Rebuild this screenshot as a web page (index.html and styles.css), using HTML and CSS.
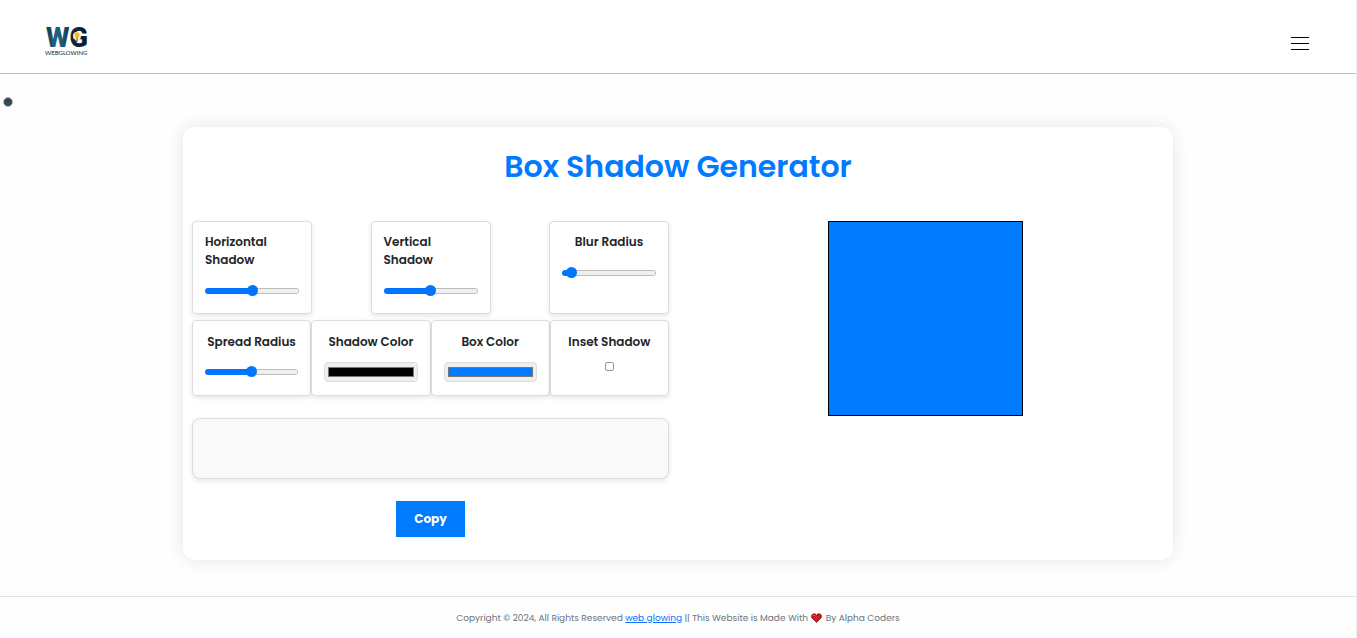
FILE: index.html
```html
<!DOCTYPE html>
<html lang="en">
<head>
<meta charset="utf-8">
<meta name="viewport" content="width=device-width, initial-scale=1">
<title>Box Shadow Generator</title>
<link rel="stylesheet" href="styles.css">
</head>
<body>
<header class="site-header">
  <a class="brand" href="#" aria-label="Web Glowing">
    <svg class="logo" viewBox="0 0 44 32" role="img" aria-label="WG Webglowing">
      <defs>
        <linearGradient id="ink" x1="0" y1="0" x2="1" y2="0">
          <stop offset="0" stop-color="#10324a"/>
          <stop offset=".2" stop-color="#1d6482"/>
          <stop offset=".4" stop-color="#1b5a76"/>
          <stop offset=".6" stop-color="#10273c"/>
          <stop offset="1" stop-color="#0c1b2c"/>
        </linearGradient>
      </defs>
      <text class="logo-letters" x="1" y="23" fill="url(#ink)">WG</text>
      <circle cx="32" cy="12" r="4" fill="#fff3c9"/>
      <circle cx="32" cy="11" r="2.500" fill="#f6b82e"/>
      <path d="M31 13h2v3h-2z" fill="#e79a22"/>
      <path d="M31 17h2" stroke="#1b3345" stroke-width="1"/>
      <text class="logo-caption" x="0" y="31">WEBGLOWING</text>
    </svg>
  </a>
  <button class="menu" type="button" aria-label="Open menu">
    <svg viewBox="0 0 18 13" width="18" height="13" aria-hidden="true" shape-rendering="crispEdges">
      <path d="M0 .5h18M0 6.500h18M0 12.500h18" stroke="#000" fill="none"/>
    </svg>
  </button>
</header>
<span class="cursor-dot"></span>

<main class="page">
  <section class="panel">
    <h1 class="title">Box Shadow Generator</h1>
    <div class="columns">
      <div class="controls">
        <div class="row row-spread">
          <div class="field">
            <label for="h">Horizontal Shadow</label>
            <input class="range" id="h" type="range" min="-50" max="50" value="0" style="--fill:50%">
          </div>
          <div class="field">
            <label for="v">Vertical Shadow</label>
            <input class="range" id="v" type="range" min="-50" max="50" value="0" style="--fill:50%">
          </div>
          <div class="field">
            <label for="blur">Blur Radius</label>
            <input class="range" id="blur" type="range" min="0" max="100" value="5" style="--fill:6%">
          </div>
        </div>
        <div class="row row-even">
          <div class="field">
            <label for="spread">Spread Radius</label>
            <input class="range" id="spread" type="range" min="-50" max="50" value="0" style="--fill:50%">
          </div>
          <div class="field">
            <label for="shadow-color">Shadow Color</label>
            <input class="color" id="shadow-color" type="color" value="#000000">
          </div>
          <div class="field">
            <label for="box-color">Box Color</label>
            <input class="color" id="box-color" type="color" value="#007bff">
          </div>
          <div class="field">
            <label for="inset">Inset Shadow</label>
            <input class="check" id="inset" type="checkbox">
          </div>
        </div>
        <output class="code" aria-label="Generated CSS"></output>
        <button class="copy" type="button">Copy</button>
      </div>
      <div class="preview-area"><div class="preview"></div></div>
    </div>
  </section>
</main>

<footer class="site-footer">
  <p>Copyright © 2024, All Rights Reserved <a href="#">web glowing</a> || This Website is Made With
    <svg class="heart" viewBox="0 0 11 10" role="img" aria-label="love"><path d="M5.500 9.300 1 4.900C0 3.500.6 1.300 2.500.9c1.200-.2 2.300.3 3 1.400C6.200 1.200 7.300.7 8.500.9c1.900.4 2.500 2.600 1.500 4z" fill="#e8101c" stroke="#3b1114" stroke-width=".8"/><path d="M2.500 3c.2-.6.600-.8 1.100-.8" stroke="#ff9a9a" fill="none"/></svg>
    By Alpha Coders</p>
</footer>
</body>
</html>
```
FILE: styles.css
```css
* {
  box-sizing: border-box;
}

body {
  margin: 0;
  min-height: 100vh;
  display: flex;
  flex-direction: column;
  border-right: 1px solid #eee;
  background: #fefefe;
  color: #212529;
  font-family: Poppins, Inter, "Open Sans", sans-serif;
  font-size: 12px;
  line-height: 18px;
}

.site-header {
  display: flex;
  align-items: flex-end;
  justify-content: space-between;
  padding: 24px 47px 17px 45px;
  border-bottom: 1px solid #bdbdbd;
  background: #fff;
}

.brand,
.logo {
  display: block;
}

.logo {
  width: 44px;
  height: 32px;
  overflow: visible;
}

.logo-letters {
  font: 900 27px Roboto, sans-serif;
}

.logo-caption {
  font: 400 6px Lato, sans-serif;
  fill: #222;
}

.menu {
  display: flex;
  padding: 6px 0;
  border: 0;
  background: none;
}

.cursor-dot {
  position: absolute;
  top: 97px;
  left: 3px;
  width: 10px;
  height: 10px;
  border: 1px solid #a9b6bd;
  border-radius: 50%;
  background: #37474f;
}

.page {
  padding: 53px 16px 36px;
}

.panel {
  max-width: 990px;
  margin: 0 auto;
  padding: 18px 9px 23px;
  border-radius: 12px;
  background: #fff;
  box-shadow: 0 0 18px rgba(0, 0, 0, 0.1);
}

.title {
  margin: 0 0 33px;
  color: #007bff;
  font-size: 30px;
  font-weight: 600;
  line-height: 43px;
  text-align: center;
}

.columns {
  display: grid;
  grid-template-columns: 1fr 1fr;
  gap: 18px;
}

.controls {
  display: flex;
  flex-direction: column;
}

.row {
  display: grid;
  margin-bottom: 6px;
}

.row-spread {
  grid-template-columns: repeat(3, 120px);
  justify-content: space-between;
}

.row-even {
  grid-template-columns: repeat(4, 1fr);
  margin-bottom: 22px;
}

.field {
  display: flex;
  flex-direction: column;
  align-items: center;
  gap: 12px;
  padding: 11px 12px 12px;
  border: 1px solid #ddd;
  border-radius: 4px;
  background: #fff;
  box-shadow: 0 2px 5px rgba(0, 0, 0, 0.1);
}

.row-even .field {
  gap: 11px;
  padding: 12px 12px 13px;
}

.field label {
  width: max-content;
  max-width: 100%;
  font-weight: 600;
}

.range {
  appearance: none;
  width: 100%;
  height: 20px;
  margin: 0;
  background: none;
}

.range::-webkit-slider-runnable-track {
  height: 6px;
  border-radius: 3px;
  background:
    linear-gradient(to right, #0075ff var(--fill), transparent var(--fill)),
    linear-gradient(#efefef, #efefef) center / calc(100% - 2px) 4px no-repeat,
    #bdbdbd;
}

.range::-webkit-slider-thumb {
  appearance: none;
  width: 11px;
  height: 11px;
  margin-top: -3px;
  border-radius: 50%;
  background: #0075ff;
}

.color {
  appearance: none;
  width: 100%;
  height: 20px;
  margin: 0;
  padding: 4px 3px;
  border: 1px solid #ddd;
  border-radius: 4px;
  background: #efefef;
}

.color::-webkit-color-swatch-wrapper {
  padding: 0;
}

.color::-webkit-color-swatch {
  border: 1px solid #777;
  border-radius: 0;
}

.check {
  appearance: none;
  width: 9px;
  height: 9px;
  margin: 0;
  border: 1px solid #999;
  border-radius: 2px;
  background: #fff;
}

.code {
  display: block;
  min-height: 61px;
  padding: 12px;
  border: 1px solid #ddd;
  border-radius: 8px;
  background: #f9f9f9;
  box-shadow: 0 2px 5px rgba(0, 0, 0, 0.1);
}

.copy {
  align-self: center;
  margin-top: 22px;
  padding: 9px 18px;
  border: 0;
  background: #007bff;
  color: #fff;
  font: inherit;
  font-weight: 700;
}

.preview-area {
  display: flex;
  justify-content: center;
  align-items: flex-start;
}

.preview {
  width: 195px;
  aspect-ratio: 1;
  border: 1px solid #000;
  background: #007bff;
}

.site-footer {
  padding: 12px 16px 8px;
  border-top: 1px solid #e2e2e2;
  color: #6c757d;
  font-size: 9px;
  text-align: center;
}

.site-footer p {
  margin: 0;
}

.site-footer a {
  color: #0d6efd;
}

.heart {
  width: 11px;
  height: 10px;
  margin: 0 1px;
  vertical-align: -2px;
}
```
